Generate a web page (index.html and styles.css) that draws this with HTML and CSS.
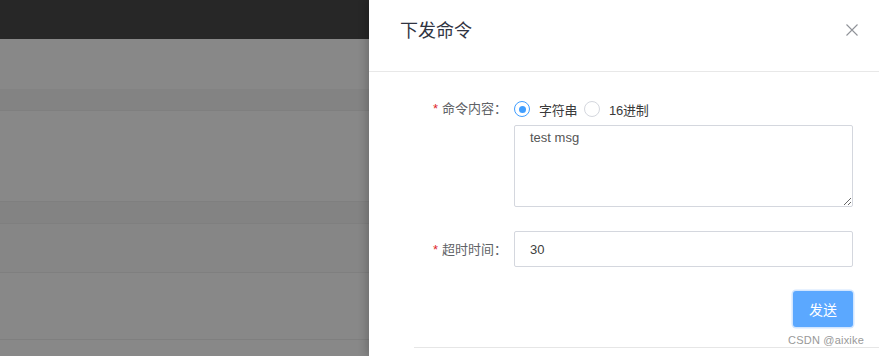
FILE: index.html
```html
<!DOCTYPE html>
<html lang="zh">
<head>
<meta charset="utf-8">
<title>下发命令</title>
<link rel="stylesheet" href="styles.css">
</head>
<body>
<div class="page">
  <div class="backdrop">
    <div class="topbar"></div>
    <div class="band b1"></div>
    <div class="band head"></div>
    <div class="band b2"></div>
    <div class="band head"></div>
    <div class="band b3"></div>
    <div class="band b4"></div>
    <div class="band b5"></div>
  </div>
  <aside class="drawer">
    <header class="drawer-header">
      <span class="drawer-title">下发命令</span>
      <button class="close" aria-label="关闭">
        <svg width="12" height="12" viewBox="0 0 12 12"><path d="M0.5 0.5 L11.5 11.5 M11.5 0.5 L0.5 11.5" stroke="#909399" stroke-width="1.1" fill="none"/></svg>
      </button>
    </header>
    <div class="drawer-body">
      <div class="form-item">
        <label class="form-label req">命令内容：</label>
        <div class="form-content">
          <div class="radio-group">
            <span class="radio checked"><span class="radio-inner"></span><span class="radio-label">字符串</span></span>
            <span class="radio"><span class="radio-inner"></span><span class="radio-label">16进制</span></span>
          </div>
          <textarea class="textarea">test msg</textarea>
        </div>
      </div>
      <div class="form-item item-2">
        <label class="form-label req tall">超时时间：</label>
        <div class="form-content">
          <input class="input" value="30">
        </div>
      </div>
      <div class="actions">
        <button class="btn-primary">发送</button>
      </div>
      <div class="divider"></div>
    </div>
    <div class="watermark">CSDN @aixike</div>
  </aside>
</div>
</body>
</html>
```
FILE: styles.css
```css
* { box-sizing: border-box; }
html, body { margin: 0; padding: 0; }
body {
  font-family: "Liberation Sans", "Noto Sans CJK SC", sans-serif;
  width: 879px;
  height: 356px;
  overflow: hidden;
}
.page {
  display: flex;
  height: 356px;
}
.backdrop {
  flex: 1;
  display: flex;
  flex-direction: column;
  background: #888888;
}
.topbar { height: 39px; background: #272727; }
.band { border-bottom: 1px solid #7f7f7f; }
.b1 { height: 50px; border-bottom: none; }
.head { height: 22px; background: #838383; }
.b2 { height: 91px; }
.b3 { height: 49px; background: #868686; }
.b4 { height: 67px; }
.b5 { flex: 1; border-bottom: none; }

.drawer {
  width: 510px;
  background: #fff;
  position: relative;
  box-shadow: -3px 0 8px rgba(0,0,0,0.18);
  display: flex;
  flex-direction: column;
}
.drawer-header {
  height: 72px;
  border-bottom: 1px solid #e8e8e8;
  display: flex;
  align-items: flex-start;
  justify-content: space-between;
  padding: 18px 21px 0 31px;
}
.drawer-title {
  font-family: "Noto Sans CJK SC", sans-serif;
  font-size: 18px;
  line-height: 22px;
  color: #303442;
}
.close {
  border: 0;
  background: none;
  padding: 0;
  margin-top: 6px;
  width: 12px;
  height: 12px;
  display: flex;
}
.drawer-body {
  padding: 27px 26px 0 45px;
}
.form-item {
  display: flex;
}
.item-2 { margin-top: 24px; }
.form-label {
  width: 100px;
  flex: none;
  text-align: right;
  padding-right: 7px;
  font-family: "Noto Sans CJK SC", sans-serif;
  font-size: 13px;
  line-height: 18px;
  color: #606266;
}
.form-label.tall { line-height: 35px; }
.req::before {
  content: "*";
  color: #e0262a;
  margin-right: 4px;
  font-family: "Liberation Sans", sans-serif;
}
.form-content { flex: 1; display: flex; flex-direction: column; }
.radio-group {
  display: flex;
  align-items: center;
  height: 20px;
  gap: 7px;
}
.radio {
  display: flex;
  align-items: center;
  gap: 9px;
}
.radio-inner {
  width: 16px;
  height: 16px;
  border-radius: 50%;
  border: 1px solid #d4d7de;
  background: #fff;
  position: relative;
}
.radio.checked .radio-inner {
  border: 1.5px solid #409eff;
}
.radio.checked .radio-inner::after {
  content: "";
  position: absolute;
  left: 50%;
  top: 50%;
  width: 7px;
  height: 7px;
  margin: -3.5px 0 0 -3.5px;
  border-radius: 50%;
  background: #409eff;
}
.radio-label {
  font-family: "Liberation Sans", "Noto Sans CJK SC", sans-serif;
  font-size: 13px;
  letter-spacing: -0.3px;
  color: #3a3a3a;
}
.textarea {
  margin-top: 6px;
  width: 339px;
  height: 82px;
  border: 1px solid #d4d7de;
  border-radius: 2px;
  padding: 2px 15px;
  font-family: "Liberation Sans", sans-serif;
  font-size: 13px;
  line-height: 20px;
  color: #555;
  resize: vertical;
  outline: none;
}
.input {
  width: 339px;
  height: 36px;
  border: 1px solid #d4d7de;
  border-radius: 2px;
  padding: 0 15px;
  font-family: "Liberation Sans", sans-serif;
  font-size: 13px;
  color: #404040;
  outline: none;
}
.actions {
  display: flex;
  justify-content: flex-end;
  margin-top: 24px;
}
.btn-primary {
  width: 60px;
  height: 36px;
  border: 0;
  border-radius: 3px;
  background: #5ba8ff;
  box-shadow: 0 0 0 1.5px #d2e6ff;
  color: #fff;
  font-family: "Noto Sans CJK SC", sans-serif;
  font-size: 14px;
  padding: 0;
}
.divider {
  margin-top: 20px;
  margin-right: -26px;
  border-top: 1px solid #e6e6e6;
}
.watermark {
  position: absolute;
  right: 15px;
  top: 334px;
  font-family: "Liberation Sans", sans-serif;
  font-size: 11px;
  letter-spacing: 0.2px;
  color: #999;
  text-shadow: 0 0 1px #fff;
}
```
